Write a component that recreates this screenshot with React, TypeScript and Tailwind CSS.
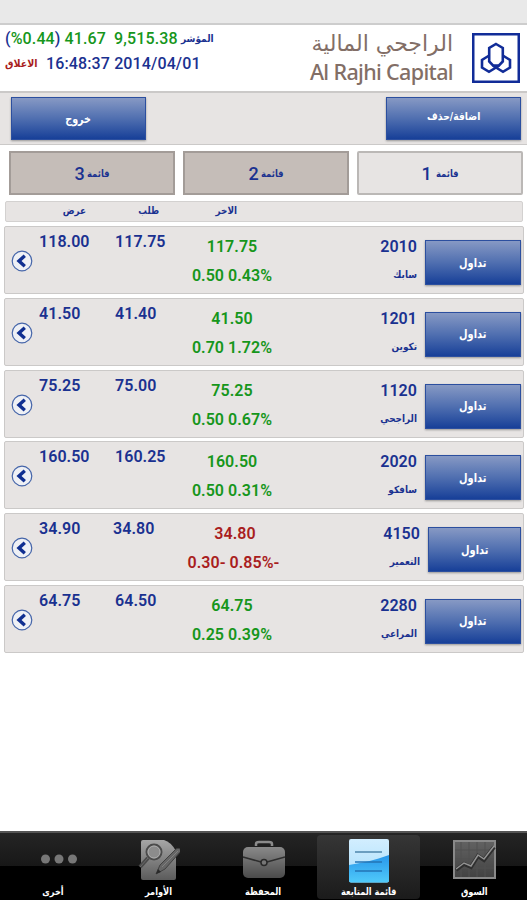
import React from "react";

type Stock = {
  code: string;
  name: string;
  ask: string;
  bid: string;
  last: string;
  change: string;
  down?: boolean;
};

const stocks: Stock[] = [
  { code: "2010", name: "سابك", ask: "118.00", bid: "117.75", last: "117.75", change: "0.50 0.43%" },
  { code: "1201", name: "تكوين", ask: "41.50", bid: "41.40", last: "41.50", change: "0.70 1.72%" },
  { code: "1120", name: "الراجحي", ask: "75.25", bid: "75.00", last: "75.25", change: "0.50 0.67%" },
  { code: "2020", name: "سافكو", ask: "160.50", bid: "160.25", last: "160.50", change: "0.50 0.31%" },
  { code: "4150", name: "التعمير", ask: "34.90", bid: "34.80", last: "34.80", change: "0.30- 0.85%-", down: true },
  { code: "2280", name: "المراعي", ask: "64.75", bid: "64.50", last: "64.75", change: "0.25 0.39%" },
];

const arabic = "font-['DejaVu_Sans',sans-serif] font-bold tracking-normal";
const blueButton =
  "flex items-center justify-center border border-[#2c4f9f] bg-linear-to-b from-[#8799c4] via-[#506fb0] to-[#173f98] text-white shadow-[0_1px_2px_rgba(0,0,0,0.35)]";

function Logo() {
  return (
    <svg className="block h-[50px] w-[48px]" viewBox="0 0 48 50" fill="none" stroke="#112c98">
      <rect x="1.25" y="1.25" width="45.5" height="47.5" strokeWidth="2.5" />
      <g strokeWidth="2.600" strokeLinejoin="miter">
        <path d="M24 11 L30.800 15 V28.500 L27 32.500 H21 L17.200 28.500 V15 Z" />
        <path d="M17.200 22.500 L10 27 V34.500 L17 38.800 L24 34.500 L21 32.500" />
        <path d="M30.800 22.500 L38 27 V34.500 L31 38.800 L24 34.500 L27 32.500" />
      </g>
    </svg>
  );
}

function Chevron() {
  return (
    <svg className="block size-[22px]" viewBox="0 0 22 22" fill="none">
      <circle cx="11" cy="11" r="9.800" fill="#eef0f5" stroke="#4565a9" strokeWidth="1.200" />
      <path d="M13.800 5.800 L8 11 L13.800 16.200" stroke="#102f91" strokeWidth="3.400" />
    </svg>
  );
}

function StockRow({ s }: { s: Stock }) {
  const tone = s.down ? "text-[#a91c20]" : "text-[#16961b]";
  return (
    <div className="flex h-[68px] rounded-[2px] border border-[#cbc9c8] bg-[#e7e4e3] text-[16px] leading-5 font-semibold tracking-[0.050px] text-[#1a3190]">
      <div className="ml-[6px] flex w-[22px] items-center pt-[2px]">
        <Chevron />
      </div>
      <div className="ml-[6px] w-[76px] pt-[5px]">{s.ask}</div>
      <div className={s.down ? "-ml-[2px] w-[62px] pt-[5px]" : "w-[60px] pt-[5px]"}>{s.bid}</div>
      <div className={`w-[114px] pt-[10px] text-center whitespace-nowrap ${tone} ${s.down ? "pl-[6px]" : ""}`}>
        <div>{s.last}</div>
        <div className={`mt-[9px] ${s.down ? "-ml-[3px]" : ""}`}>{s.change}</div>
      </div>
      <div className="mr-[8px] flex-1 pt-[10px] text-right">
        <div>{s.code}</div>
        <div dir="rtl" className={`mt-[8px] origin-right scale-x-[0.89] ${arabic} text-[10px]`}>
          <div className="text-start">{s.name}</div>
        </div>
      </div>
      <button
        className={`mt-[13px] mr-[2px] h-[45px] ${s.down ? "w-[93px]" : "w-[96px]"} ${blueButton} ${arabic} text-[12px]`}
      >
        <span className="inline-block scale-x-[0.82]">تداول</span>
      </button>
    </div>
  );
}

function MoreIcon() {
  return (
    <svg width="44" height="44" viewBox="0 0 44 44" fill="#777">
      <circle cx="8.500" cy="20" r="4.500" />
      <circle cx="22" cy="20" r="4.500" />
      <circle cx="35.500" cy="20" r="4.500" />
    </svg>
  );
}

function OrdersIcon() {
  return (
    <svg width="44" height="44" viewBox="0 0 44 44" fill="none">
      <defs>
        <linearGradient id="paper" x1="0" y1="0" x2="0" y2="1">
          <stop stopColor="#a6a6a6" />
          <stop offset="1" stopColor="#5b5b5b" />
        </linearGradient>
      </defs>
      <path d="M5 3 Q5 1 7 1 H28 Q35 3 40 12 V39 Q40 41 38 41 H7 Q5 41 5 39 Z" fill="url(#paper)" />
      <circle cx="18" cy="13" r="7.500" fill="#8c8c8c" stroke="#4b4b4b" strokeWidth="2" />
      <circle cx="18" cy="13" r="6" stroke="#adadad" />
      <path d="M12 19 L4 28" stroke="#494949" strokeWidth="4" />
      <path d="M12 19 L4 28" stroke="#6b6b6b" />
      <path d="M20 35 L24 26 L40 10 Q44 8 45 12 L29 30 Z" fill="#666" stroke="#414141" />
      <path d="M26 28 L42 12" stroke="#808080" />
      <path d="M20 35 L22 30 L25 33 Z" fill="#292929" />
    </svg>
  );
}

function CaseIcon() {
  return (
    <svg width="44" height="44" viewBox="0 0 44 44" fill="none">
      <defs>
        <linearGradient id="leather" x1="0" y1="0" x2="0" y2="1">
          <stop stopColor="#898989" />
          <stop offset="1" stopColor="#4b4b4b" />
        </linearGradient>
      </defs>
      <path d="M15 7 V5 Q15 3 18 3 H28 Q31 3 31 5 V7" stroke="#8b8b8b" strokeWidth="2.500" />
      <rect x="2" y="8" width="42" height="31" rx="5" fill="url(#leather)" />
      <path d="M2 18 L20 23 M26 23 L44 18" stroke="#2d2d2d" strokeWidth="1.500" />
      <circle cx="23" cy="23.500" r="3" fill="#777" stroke="#292929" strokeWidth="1.500" />
    </svg>
  );
}

function ListIcon() {
  return (
    <svg width="44" height="44" viewBox="0 0 44 44" fill="none">
      <defs>
        <linearGradient id="sheet" x1="0" y1="0" x2="0" y2="1">
          <stop stopColor="#d2eeff" />
          <stop offset="1" stopColor="#a9ddfb" />
        </linearGradient>
        <linearGradient id="wave" x1="0" y1="0" x2="0" y2="1">
          <stop stopColor="#2896ea" />
          <stop offset="1" stopColor="#50cafa" />
        </linearGradient>
      </defs>
      <rect x="2" y="0" width="40" height="43.500" rx="2" fill="url(#sheet)" />
      <path d="M2 26 C15 24 28 21 42 16 V41.500 Q42 43.500 40 43.500 H4 Q2 43.500 2 41.500 Z" fill="url(#wave)" />
      <path d="M8 13 H35" stroke="#5c91b5" strokeWidth="1.700" />
      <path d="M8 23 H35 M8 32 H35" stroke="#2374b5" strokeWidth="1.700" />
    </svg>
  );
}

function MarketIcon() {
  return (
    <svg width="44" height="44" viewBox="0 0 44 44" fill="none">
      <defs>
        <linearGradient id="screen" x1="0" y1="0" x2="0" y2="1">
          <stop stopColor="#626262" />
          <stop offset="1" stopColor="#424242" />
        </linearGradient>
      </defs>
      <rect x="2" y="2" width="41" height="37" fill="url(#screen)" stroke="#898989" strokeWidth="2" />
      <path d="M9 3 V38 M17 3 V38 M25 3 V38 M33 3 V38 M3 11 H42 M3 20 H42 M3 29 H42" stroke="#515151" />
      <path d="M4 31 L12 25 L19 28 L26 17 L32 21 L42 8" stroke="#2f2f2f" strokeWidth="4" />
      <path d="M4 30 L12 24 L19 27 L26 16 L32 20 L42 7" stroke="#929292" strokeWidth="1.500" />
    </svg>
  );
}

const nav = [
  { label: "أخرى", icon: <MoreIcon />, more: true },
  { label: "الأوامر", icon: <OrdersIcon /> },
  { label: "المحفظة", icon: <CaseIcon /> },
  { label: "قائمة المتابعة", icon: <ListIcon />, active: true },
  { label: "السوق", icon: <MarketIcon /> },
];

export default function App() {
  return (
    <div className="flex h-[900px] w-[527px] flex-col overflow-hidden bg-white font-['Roboto',sans-serif]">
      <div className="h-[25px] shrink-0 border-b-2 border-[#cdcdcd] bg-[#e9e9e9]" />
      <header className="flex h-[66px] shrink-0 justify-between pr-[7px] pl-[5px]">
        <div className="pt-[4px] text-[16px] leading-5 font-medium tracking-[0.130px] text-[#1a3190]">
          <div className="flex items-center whitespace-pre">
            <span>(<span className="text-[#16961b]">%0.44</span>)</span>
            <span className="ml-1 text-[#16961b]">41.67</span>
            <span className="ml-[8px] text-[#16961b]">9,515.38</span>
            <span className={`ml-[3px] origin-left scale-x-[0.9] text-[10px] ${arabic}`}>المؤشر</span>
          </div>
          <div className="mt-[5px] flex items-center">
            <span className={`w-[33px] origin-left scale-x-[0.95] text-[10px] whitespace-nowrap text-[#a91c20] ${arabic}`}>الاغلاق</span>
            <span className="ml-[8px]">16:48:37 2014/04/01</span>
          </div>
        </div>
        <div className="flex">
          <div className="mr-[19px] pt-[7px] text-right text-[#826e66]">
            <div dir="rtl" className="text-[22px] leading-6 whitespace-nowrap font-['DejaVu_Sans',sans-serif]">الراجحي المالية</div>
            <div className="mt-[4px] text-[21.500px] leading-6 font-medium tracking-[-0.650px] whitespace-nowrap font-['Noto_Sans',sans-serif]">Al Rajhi Capital</div>
          </div>
          <div className="pt-[8px]"><Logo /></div>
        </div>
      </header>
      <div className="flex h-[54px] shrink-0 items-center justify-between border-t-2 border-b border-[#cbc9c8] bg-[#e7e4e3] pr-[6px] pl-[11px]">
        <button className={`h-[43px] w-[135px] ${blueButton} ${arabic} text-[12px]`}>
          <span className="inline-block scale-x-[0.8]">خروج</span>
        </button>
        <button className={`h-[43px] w-[135px] pb-[2px] ${blueButton} ${arabic} text-[11px]`}>
          <span className="inline-block scale-x-[0.84]">اضافة/حذف</span>
        </button>
      </div>
      <div className="mt-[6px] ml-[9px] flex h-[44px] w-[514px] shrink-0 gap-[8px]">
        {[3, 2, 1].map((n) => (
          <button
            key={n}
            className={`flex flex-1 items-center justify-center border-2 text-[18px] font-medium text-[#1a3190] ${
              n === 1 ? "rounded-[2px] border-[#bbb8b6] bg-[#e7e4e3]" : "border-[#a39c98] bg-[#c5bdb8]"
            }`}
          >
            {n}
            <span className={`-mr-[4px] origin-left scale-x-[0.84] text-[10px] ${n === 1 ? "ml-1" : "ml-0.5"} ${arabic}`}>قائمة</span>
          </button>
        ))}
      </div>
      <div className={`mt-[6px] ml-[5px] flex h-[21px] w-[518px] shrink-0 items-center rounded-[2px] border border-[#d3d1d0] bg-[#e7e4e3] pb-[2px] text-[10px] text-[#1a3190] ${arabic}`}>
        <span className="w-[80px] origin-right scale-x-[0.88] text-right">عرض</span>
        <span className="w-[73px] origin-right scale-x-[0.86] text-right">طلب</span>
        <span className="w-[78px] origin-right scale-x-[0.88] text-right">الاخر</span>
      </div>
      <main className="mt-[4px] ml-[4px] flex w-[520px] flex-1 flex-col gap-[3.800px]">
        {stocks.map((s) => (
          <StockRow key={s.code} s={s} />
        ))}
      </main>
      <nav className="flex h-[69px] shrink-0 border-t-2 border-[#555] bg-linear-to-b from-[#252525] from-0% via-[#171717] via-50% to-black to-50%">
        {nav.map((n) => (
          <div key={n.label} className="flex w-[105.400px] justify-center pt-[2px]">
            <div className={`flex h-[64px] w-[103px] flex-col items-center rounded-[4px] ${n.active ? "bg-linear-to-b from-[#363636] to-[#1b1b1b]" : ""}`}>
              <div className={`mt-[4px] h-[44px] ${n.more ? "pl-[13px]" : ""}`}>{n.icon}</div>
              <span className={`scale-x-[0.82] text-[10px] leading-[18px] whitespace-nowrap text-white ${arabic}`}>{n.label}</span>
            </div>
          </div>
        ))}
      </nav>
    </div>
  );
}
